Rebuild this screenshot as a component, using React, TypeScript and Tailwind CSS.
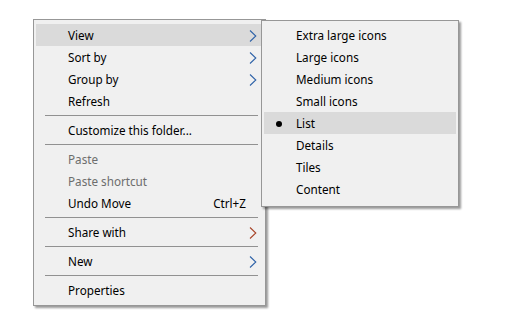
import React from "react";

type Item =
  | { kind: "sep" }
  | { kind: "item"; label: string; sub?: boolean; subColor?: string; hint?: string; disabled?: boolean; active?: boolean };

const mainItems: Item[] = [
  { kind: "item", label: "View", sub: true, active: true },
  { kind: "item", label: "Sort by", sub: true },
  { kind: "item", label: "Group by", sub: true },
  { kind: "item", label: "Refresh" },
  { kind: "sep" },
  { kind: "item", label: "Customize this folder..." },
  { kind: "sep" },
  { kind: "item", label: "Paste", disabled: true },
  { kind: "item", label: "Paste shortcut", disabled: true },
  { kind: "item", label: "Undo Move", hint: "Ctrl+Z" },
  { kind: "sep" },
  { kind: "item", label: "Share with", sub: true, subColor: "#a8452a" },
  { kind: "sep" },
  { kind: "item", label: "New", sub: true },
  { kind: "sep" },
  { kind: "item", label: "Properties" },
];

const viewItems = [
  "Extra large icons",
  "Large icons",
  "Medium icons",
  "Small icons",
  "List",
  "Details",
  "Tiles",
  "Content",
];

function Chevron({ color = "#2f63a8" }: { color?: string }) {
  return (
    <svg width="8" height="12" viewBox="0 0 8 12" className="mt-px shrink-0">
      <path d="M1 0.5 L6.8 6 L1 11.5" fill="none" stroke={color} strokeWidth="1.1" />
    </svg>
  );
}

export default function App() {
  return (
    <div className="h-[323px] w-[508px] bg-white pl-[33px] pt-[19px] font-['Noto_Sans',sans-serif] text-[11.7px] text-black">
      <div className="relative w-[233px] border border-[#979797] bg-[#f0f0f0] px-[2px] py-[4px] shadow-[2px_2px_2px_rgba(0,0,0,0.4)]">
        {mainItems.map((it, i) =>
          it.kind === "sep" ? (
            <div key={i} className="py-[3px] pl-[9px] pr-[5px]">
              <div className="h-px bg-[#919191]" />
            </div>
          ) : (
            <div
              key={i}
              className={`flex h-[22px] items-center pl-[32px] pr-[6px] ${it.active ? "bg-[#dadada]" : ""} ${it.disabled ? "text-[#6d6d6d]" : ""}`}
            >
              <span className="flex-1 pt-[2px] leading-none">{it.label}</span>
              {it.hint && <span className="pr-[11px] pt-[2px] leading-none">{it.hint}</span>}
              {it.sub && <Chevron color={it.subColor} />}
            </div>
          )
        )}

        <div className="absolute left-[227px] top-[0px] w-[198px] border border-[#979797] bg-[#f0f0f0] px-[2px] pt-[3px] pb-[6px] shadow-[2px_2px_2px_rgba(0,0,0,0.4)]">
          {viewItems.map((label) => (
            <div
              key={label}
              className={`flex h-[22px] items-center ${label === "List" ? "bg-[#dadada]" : ""}`}
            >
              <span className="flex w-[32px] justify-center pt-px">
                {label === "List" && <span className="ml-[-2px] h-[6px] w-[6px] rounded-full bg-black" />}
              </span>
              <span className="pt-[2px] leading-none">{label}</span>
            </div>
          ))}
        </div>
      </div>
    </div>
  );
}
